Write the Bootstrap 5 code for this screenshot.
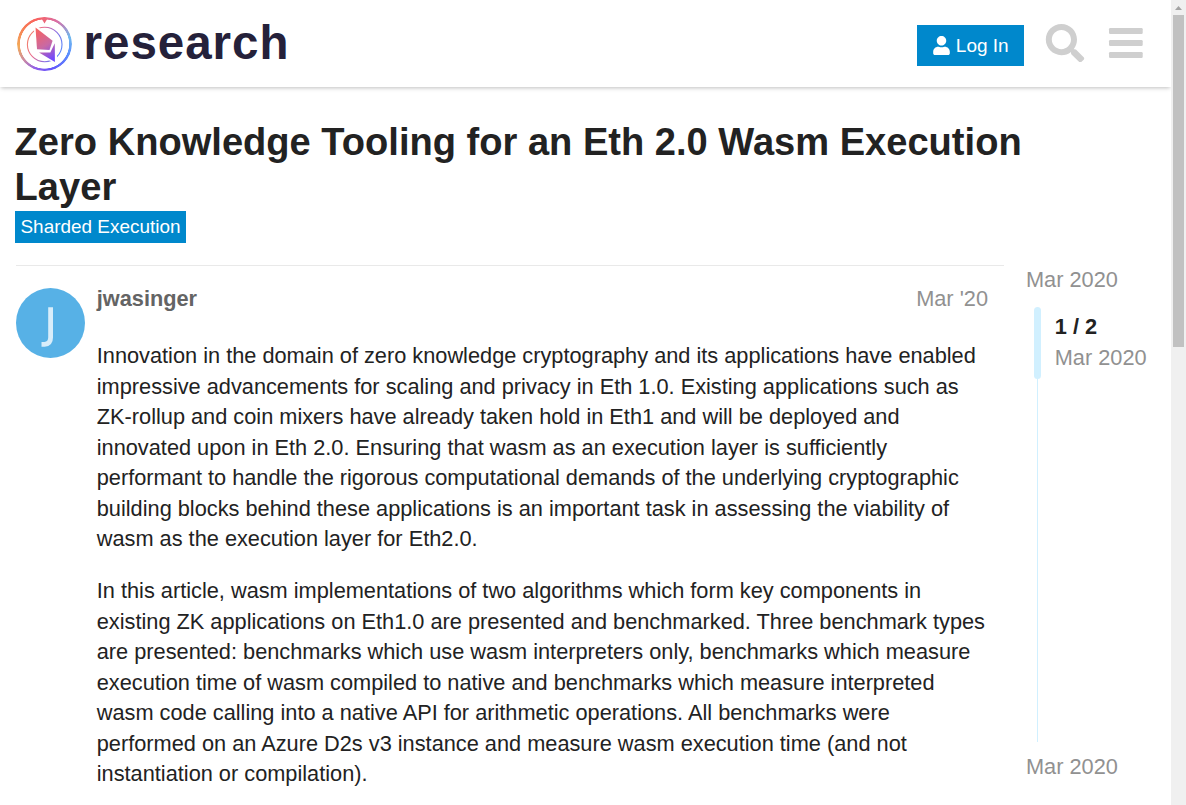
<!DOCTYPE html>
<html lang="en">
<head>
<meta charset="utf-8">
<meta name="viewport" content="width=device-width, initial-scale=1">
<title>Zero Knowledge Tooling for an Eth 2.0 Wasm Execution Layer</title>
<link href="https://cdn.jsdelivr.net/npm/bootstrap@5.3.0/dist/css/bootstrap.min.css" rel="stylesheet">
<style>
body{font-family:"Liberation Sans",Arial,sans-serif;font-size:21.75px;line-height:1.4;color:#222;background:#fff}
.site{height:805px}
.site-header{height:87px;padding:0 28px 0 16px;box-shadow:0 2px 4px -1px rgba(0,0,0,.25);background:#fff}
.brand-ring{position:absolute;left:1.2px;top:3px;width:54.600px;height:54.600px;border-radius:50%;background:conic-gradient(#ee6678,#d870a8 30deg,#71b9ee 75deg,#5a8cff 115deg,#6554fa 165deg,#8f5eeb 200deg,#c98aa8 230deg,#f3a957 265deg,#f77b55 310deg,#f9635f 340deg,#ee6678);-webkit-mask:radial-gradient(circle,transparent 24.300px,#000 24.900px);mask:radial-gradient(circle,transparent 24.300px,#000 24.900px)}
.login{width:107px;height:41px;background:#0088cc;color:#fff;font-size:19px;line-height:1;border:0;border-radius:0;padding:0 0 0 1px;gap:5.5px;margin:4px 20px 0 0}
.login:hover{background:#006da3;color:#fff}
.header-icon{margin-bottom:1px}
.menu-icon{margin-left:22px}
.topic-title{padding:33px 15px 0;height:178px}
.topic-title h1{font-size:38.09px;font-weight:700;line-height:45px;margin:0 0 0 -.4px;width:1030px}
.category{background:#0088cc;color:#fff;font-size:18.95px;line-height:32px;height:32px;width:171px;margin-top:1px}
.post-wrap{width:988px;margin-left:16px;border-top:1px solid #e9e9e9;padding-top:22px}
.avatar{width:69px;margin-right:11.75px}
.post-body{width:891.25px}
.post-meta{height:22px;line-height:22px;margin-bottom:31px;color:#919191}
.author{color:#646464}
.cooked p{margin:0 0 21.8px;line-height:30.5px}
.timeline{width:145px;margin-left:22px;color:#919191;line-height:30px}
.track{height:435px;margin:12px 0 10px 8px}
.rail{width:7px}
.handle{width:7px;height:72px;border-radius:4px;background:#d1f0ff}
.line{width:1px;height:363px;background:#d1f0ff}
.position-info{margin:4px 0 0 13.75px;line-height:31px}
.position-info strong{color:#222}
.scroll{width:15px;background:#f0f0f0}
.thumb{width:11px;height:332px;background:#c1c1c1}
</style>
</head>
<body>
<div class="site d-flex overflow-hidden">
  <div class="flex-grow-1 overflow-hidden">
    <header class="site-header d-flex align-items-center position-relative">
      <div class="brand me-auto position-relative d-flex">
      <div class="brand-ring"></div>
      <svg class="position-relative" width="276" height="60" viewBox="0 0 276 60" role="img" aria-label="research">
        <defs>
          <linearGradient id="ring" gradientUnits="userSpaceOnUse" x1="8" y1="22" x2="48" y2="38">
            <stop offset="0" stop-color="#f58a62"/><stop offset=".35" stop-color="#e96a8c"/><stop offset=".65" stop-color="#8e6de0"/><stop offset="1" stop-color="#4d8cff"/>
          </linearGradient>
          <linearGradient id="gem" gradientUnits="userSpaceOnUse" x1="20" y1="15" x2="39" y2="44">
            <stop offset="0" stop-color="#f9635f"/><stop offset=".55" stop-color="#c969a3"/><stop offset="1" stop-color="#7048ff"/>
          </linearGradient>
        </defs>
        <circle cx="28.700" cy="30.500" r="17.300" fill="none" stroke="url(#ring)" stroke-width="1.100"/>
        <path d="M25.800 5L28.500 9.500L31.200 5Z" fill="#ed6678"/>
        <path d="M17.500 10L41 26L41 50.500L20 39Z" fill="#fff"/>
        <path d="M19.500 13.500L36.600 26.800L33.500 36L21 35.200Z" fill="url(#gem)"/>
        <path d="M23 38.600L34.300 38.400L38.800 29.200L38.900 47.900Z" fill="url(#gem)"/>
        <text x="67.500" y="45" font-family="Liberation Sans,Arial,sans-serif" font-size="47.500" font-weight="700" fill="#25213a" textLength="205" lengthAdjust="spacing">research</text>
      </svg>
      </div>
      <button class="btn login d-flex align-items-center justify-content-center">
        <svg width="17" height="19" viewBox="0 0 448 512" fill="currentColor"><path d="M224 256c70.7 0 128-57.3 128-128S294.700 0 224 0 96 57.300 96 128s57.300 128 128 128zm89.600 32h-16.700c-22.200 10.200-46.900 16-72.900 16s-50.600-5.800-72.900-16h-16.700C60.200 288 0 348.200 0 422.400V464c0 26.500 21.500 48 48 48h352c26.500 0 48-21.500 48-48v-41.600c0-74.200-60.200-134.400-134.400-134.400z"/></svg>
        <span>Log In</span>
      </button>
      <svg class="header-icon" width="42" height="38.400" viewBox="0 0 512 512" fill="#cfcfcf" aria-label="Search"><path d="M505 442.700L405.300 343c-4.500-4.500-10.600-7-17-7H372c27.600-35.300 44-79.700 44-128C416 93.100 322.900 0 208 0S0 93.100 0 208s93.100 208 208 208c48.300 0 92.700-16.400 128-44v16.300c0 6.400 2.500 12.500 7 17l99.700 99.700c9.400 9.400 24.600 9.400 33.900 0l28.300-28.300c9.400-9.400 9.400-24.600.1-34zM208 336c-70.700 0-128-57.200-128-128 0-70.700 57.200-128 128-128 70.700 0 128 57.200 128 128 0 70.700-57.200 128-128 128z"/></svg>
      <svg class="header-icon menu-icon" width="35" height="30" viewBox="0 0 35 30" fill="#cfcfcf" aria-label="Menu"><rect x="1" y="0" width="33.700" height="6" rx="1.200"/><rect x="1" y="12" width="33.700" height="6" rx="1.200"/><rect x="1" y="24" width="33.700" height="6" rx="1.200"/></svg>
    </header>
    <div class="topic-title">
      <h1>Zero Knowledge Tooling for an Eth 2.0 Wasm Execution Layer</h1>
      <div class="category text-center">Sharded Execution</div>
    </div>
    <main class="d-flex align-items-start">
      <article class="post-wrap d-flex flex-shrink-0">
        <svg class="avatar flex-shrink-0" height="70" viewBox="0 0 69 70"><ellipse cx="34.500" cy="35" rx="34.500" ry="35" fill="#57b1e6"/><path d="M34.600 19.300V49.500Q34.600 56 28.500 56.300H25.500" fill="none" stroke="#d8edfa" stroke-width="4.800"/></svg>
        <div class="post-body">
          <div class="post-meta d-flex justify-content-between"><strong class="author">jwasinger</strong><span>Mar '20</span></div>
          <div class="cooked">
            <p>Innovation in the domain of zero knowledge cryptography and its applications have enabled impressive advancements for scaling and privacy in Eth 1.0. Existing applications such as ZK-rollup and coin mixers have already taken hold in Eth1 and will be deployed and innovated upon in Eth 2.0. Ensuring that wasm as an execution layer is sufficiently performant to handle the rigorous computational demands of the underlying cryptographic building blocks behind these applications is an important task in assessing the viability of wasm as the execution layer for Eth2.0.</p>
            <p>In this article, wasm implementations of two algorithms which form key components in existing ZK applications on Eth1.0 are presented and benchmarked. Three benchmark types are presented: benchmarks which use wasm interpreters only, benchmarks which measure execution time of wasm compiled to native and benchmarks which measure interpreted wasm code calling into a native API for arithmetic operations. All benchmarks were performed on an Azure D2s v3 instance and measure wasm execution time (and not instantiation or compilation).</p>
          </div>
        </div>
      </article>
      <aside class="timeline flex-shrink-0">
        <div>Mar 2020</div>
        <div class="track d-flex">
          <div class="rail d-flex flex-column align-items-center"><div class="handle"></div><div class="line"></div></div>
          <div class="position-info"><strong>1 / 2</strong><div>Mar 2020</div></div>
        </div>
        <div>Mar 2020</div>
      </aside>
    </main>
  </div>
  <div class="scroll flex-shrink-0 d-flex flex-column align-items-center">
    <svg class="flex-shrink-0" width="15" height="15" viewBox="0 0 15 15"><path d="M4 10L7.500 6L11 10Z" fill="#a3a3a3"/></svg>
    <div class="thumb flex-shrink-0"></div>
  </div>
</div>
<script src="https://cdn.jsdelivr.net/npm/bootstrap@5.3.0/dist/js/bootstrap.bundle.min.js"></script>
</body>
</html>
